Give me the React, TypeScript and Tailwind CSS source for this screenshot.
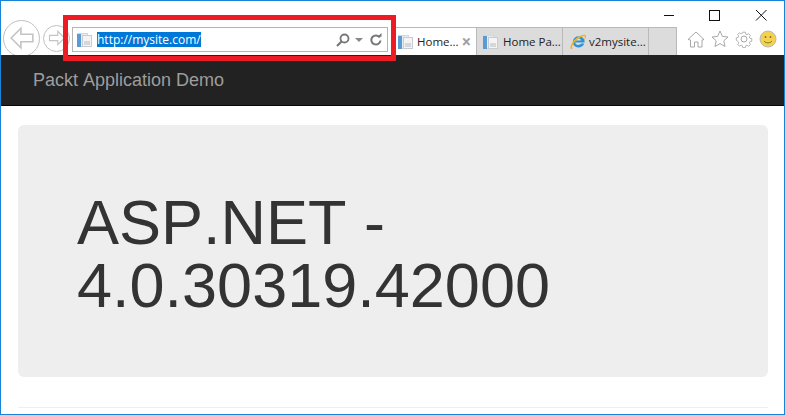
/**
 * IE11 window showing the Packt demo page with a highlighted address bar
 */

function PageIcon() {
  return (
    <svg width="17" height="16" viewBox="0 0 17 16" className="shrink-0">
      <rect x="1.500" y="1.500" width="10" height="13" fill="#e8ebf0" stroke="#d4d8de" />
      <rect x="1" y="2" width="4" height="13" fill="#5b9bd5" />
      <rect x="6.500" y="3.500" width="9" height="11" fill="#f4f4f4" stroke="#c8ccd0" />
      <rect x="8" y="9" width="6" height="4" fill="#d4d8dc" />
    </svg>
  );
}

function IeIcon() {
  return (
    <svg width="18" height="18" viewBox="0 0 18 18" className="shrink-0">
      <path d="M15.500 9.500H6.200c.2 2.600 3.800 3.400 6 1h3.100c-1.600 4.600-8.400 5.200-10.700 1.600-1.400-2.400-.9-5.800 1.400-7.600 3-2.300 8-1 9.400 2.400.3.800.2 1.600.1 2.600zM6.300 7.400h5.600c-.3-2.600-5-2.800-5.600 0z" fill="#2f93d9" />
      <path d="M2 16c-2-2 2-9 7-12 4-2.500 7.500-3 8-1 .4 1.500-.8 3-2 4.500.2-1.600 1.400-3.300.8-3.900C14.500 2.500 11.500 4 9 6 5 9 2 13.500 3.500 15.500c-.4.500-1 .8-1.500.5z" fill="#f2b21c" />
    </svg>
  );
}

function Tab({ label, active, icon, className }: { label: string; active?: boolean; icon: React.ReactNode; className: string }) {
  return (
    <div
      className={`flex h-full items-center border-t border-r border-[#b9b9b9] font-['Open_Sans',sans-serif] text-[11.500px] text-[#222] ${className} ${
        active ? 'bg-white' : 'bg-[#dcdcdc]'
      }`}
    >
      {icon}
      <span>{label}</span>
      {active && <span className="mr-[5px] ml-auto text-[17px] leading-none font-bold text-[#a0a0a0]">×</span>}
    </div>
  );
}

function NavCircle({ size, arrow }: { size: string; arrow: string }) {
  return (
    <div className={`flex shrink-0 items-center justify-center rounded-full border border-[#c0c0c0] bg-white ${size}`}>
      <svg viewBox="0 0 24 24" className={arrow} fill="none" stroke="#c4c4c4" strokeWidth="1.500">
        <path d="M11 3 2 12l9 9v-5.500h11v-7H11z" />
      </svg>
    </div>
  );
}

export default function App() {
  return (
    <div className="relative flex h-[415px] w-[785px] flex-col overflow-hidden border border-[#1883d7] bg-white font-['Liberation_Sans',Arial,sans-serif] [font-kerning:none]">
      {/* title bar + toolbar */}
      <div className="h-[54px] shrink-0">
        <div className="flex h-[26px] items-start justify-end">
          <svg width="120" height="16" viewBox="0 0 120 16" className="mt-[6px]" fill="none" stroke="#111" strokeWidth="1">
            <path d="M0 8.500h10" />
            <rect x="45.500" y="3.500" width="10" height="10" />
            <path d="M92 3l10.500 10.500M102.500 3 92 13.500" />
          </svg>
        </div>
        <div className="flex h-[28px] items-stretch">
          <div className="-mt-[16px] flex h-[44px] w-[71px] shrink-0 items-center overflow-hidden pl-[2px]">
            <div className="mt-[10px] flex items-center">
              <NavCircle size="h-[37px] w-[37px]" arrow="h-[26px] w-[26px]" />
              <NavCircle size="ml-[3px] h-[27px] w-[27px]" arrow="h-[18px] w-[18px] -scale-x-100" />
            </div>
          </div>
          <div className="flex h-[25px] w-[316px] shrink-0 items-center border border-[#b5b5b5] pl-[3px]">
            <PageIcon />
            <span className="ml-[4px] bg-[#0078d7] font-['Open_Sans',sans-serif] text-[12px] leading-[15px] text-white">http://mysite.com/</span>
            <div className="ml-auto flex items-center gap-[5px] pr-[5px]">
              <svg width="14" height="14" viewBox="0 0 14 14" fill="none" stroke="#777" strokeWidth="1.800">
                <circle cx="8.500" cy="5.500" r="4" />
                <path d="M5.500 8.500 1 13" strokeWidth="2.200" />
              </svg>
              <svg width="8" height="4" viewBox="0 0 8 4"><path d="M0 0h8L4 4z" fill="#888" /></svg>
              <svg width="12" height="13" viewBox="0 0 12 13" className="ml-[2px]" fill="none" stroke="#777" strokeWidth="2">
                <path d="M9.800 4.500A4.600 4.600 0 1 0 10.500 7.500" />
                <path d="M7.500 3.800h4V0z" fill="#777" stroke="none" />
              </svg>
            </div>
          </div>
          <div className="ml-[8px] flex h-full w-[281px] shrink-0">
            <Tab label="Home..." active icon={<PageIcon />} className="w-[81px] gap-[3px] pl-[1px]" />
            <Tab label="Home Pa..." icon={<PageIcon />} className="w-[86px] gap-[4px] pl-[5px]" />
            <Tab label="v2mysite..." icon={<IeIcon />} className="w-[86px] gap-[2px] pl-[6px]" />
            <div className="h-full w-[28px] border-t border-r border-[#b9b9b9] bg-[#dcdcdc]" />
          </div>
          <div className="ml-[10px] flex items-center gap-[6px] pb-[4px]">
            <svg width="18" height="18" viewBox="0 0 18 18" fill="white" stroke="#a8a8a8">
              <path d="M1 9.500 9 2l8 7.500-2 .5v7h-4v-5H7.500v5h-4v-7z" />
            </svg>
            <svg width="18" height="18" viewBox="0 0 18 18" fill="white" stroke="#a8a8a8">
              <path d="m9 1 2.400 5.400 5.600.6-4.200 3.800 1.200 5.700L9 13.600l-5 2.900 1.200-5.700L1 7l5.600-.6z" />
            </svg>
            <svg width="18" height="18" viewBox="0 0 18 18" fill="white" stroke="#a8a8a8">
              <path d="M7.500 1h3l.4 2.200 1.500.7 2-1.200 2 2-1.200 2 .7 1.500 2.100.3v3l-2.100.4-.7 1.500 1.200 2-2 2-2-1.200-1.500.7-.4 2.100h-3l-.4-2.100-1.500-.7-2 1.200-2-2 1.200-2-.7-1.500L0 10.500v-3l2.100-.3.700-1.500-1.200-2 2-2 2 1.200 1.500-.7z" transform="translate(1.300 1.300) scale(.86)" />
              <circle cx="9" cy="9" r="3" />
            </svg>
            <svg width="18" height="18" viewBox="0 0 18 18">
              <circle cx="9" cy="9" r="8" fill="#f2d24e" stroke="#b9b9b9" />
              <circle cx="6.500" cy="7" r="1" fill="#8a7420" />
              <circle cx="11.500" cy="7" r="1" fill="#8a7420" />
              <path d="M5 11c2 2.500 6 2.500 8 0" fill="none" stroke="#8a7420" />
            </svg>
          </div>
        </div>
      </div>

      {/* navbar */}
      <div className="flex h-[51px] shrink-0 items-center border-b border-[#080808] bg-[#222] pl-[32px] text-[18px] text-[#9d9d9d]">
        Packt Application Demo
      </div>

      {/* page body */}
      <div className="flex flex-1 flex-col pt-[19px] pr-[16px] pl-[17px]">
        <div className="flex h-[252px] shrink-0 items-center rounded-[6px] bg-[#eee] pl-[59px] text-[63px] leading-[63px] text-[#333]">
          <h1 className="translate-y-[3px]">
            ASP.NET -<br />
            4.0.30319.42000
          </h1>
        </div>
        <div className="mt-[30px] border-t border-[#eee]" />
      </div>

      {/* red annotation round the address bar */}
      <div className="absolute top-[14px] left-[62px] h-[46px] w-[333px] border-[5px] border-[#ed1c24]" />
    </div>
  );
}
